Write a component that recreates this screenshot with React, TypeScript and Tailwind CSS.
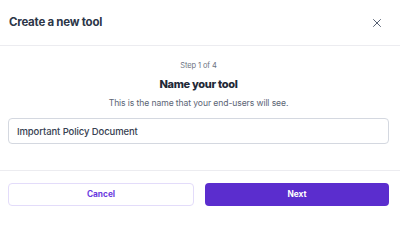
import { X } from "lucide-react";

export default function App() {
  return (
    <div className="w-[400px] h-[215px] bg-white overflow-hidden font-['Inter','Liberation_Sans',sans-serif]">
      <div className="h-[46px] flex items-center justify-between pl-[9px] pr-[16px] border-b border-[#ececf0]">
        <h1 className="text-[11.5px] font-bold tracking-[-0.25px] text-[#2d3648]">Create a new tool</h1>
        <X className="w-[14px] h-[14px] text-[#4a5568]" strokeWidth={1.6} />
      </div>
      <div className="pl-2 pr-[11px] pt-[14px] pb-[26px] border-b border-[#ececf0] flex flex-col items-center">
        <p className="text-[7.5px] leading-[12px] tracking-[-0.1px] text-[#6b7280]">Step 1 of 4</p>
        <h2 className="mt-[4px] text-[11px] leading-[16px] font-extrabold tracking-[-0.3px] text-[#1f2937]">Name your tool</h2>
        <p className="mt-[4px] text-[8.6px] leading-[14px] tracking-[-0.1px] text-[#5b6474]">This is the name that your end-users will see.</p>
        <input
          className="mt-[8px] w-full h-[26px] rounded-[4px] border-[1.5px] border-[#d4d8e0] px-[8px] text-[9.5px] font-medium tracking-[-0.1px] text-[#374151] outline-none"
          defaultValue="Important Policy Document"
        />
      </div>
      <div className="pl-2 pr-[11px] pt-[12px] flex gap-[11px]">
        <button className="flex-1 h-[23px] rounded-[4px] border border-[#e3dcfa] text-[8.3px] font-bold text-[#6a3be0]">Cancel</button>
        <button className="flex-1 h-[23px] rounded-[4px] bg-[#5b2dce] text-[8.3px] font-bold text-white">Next</button>
      </div>
    </div>
  );
}
